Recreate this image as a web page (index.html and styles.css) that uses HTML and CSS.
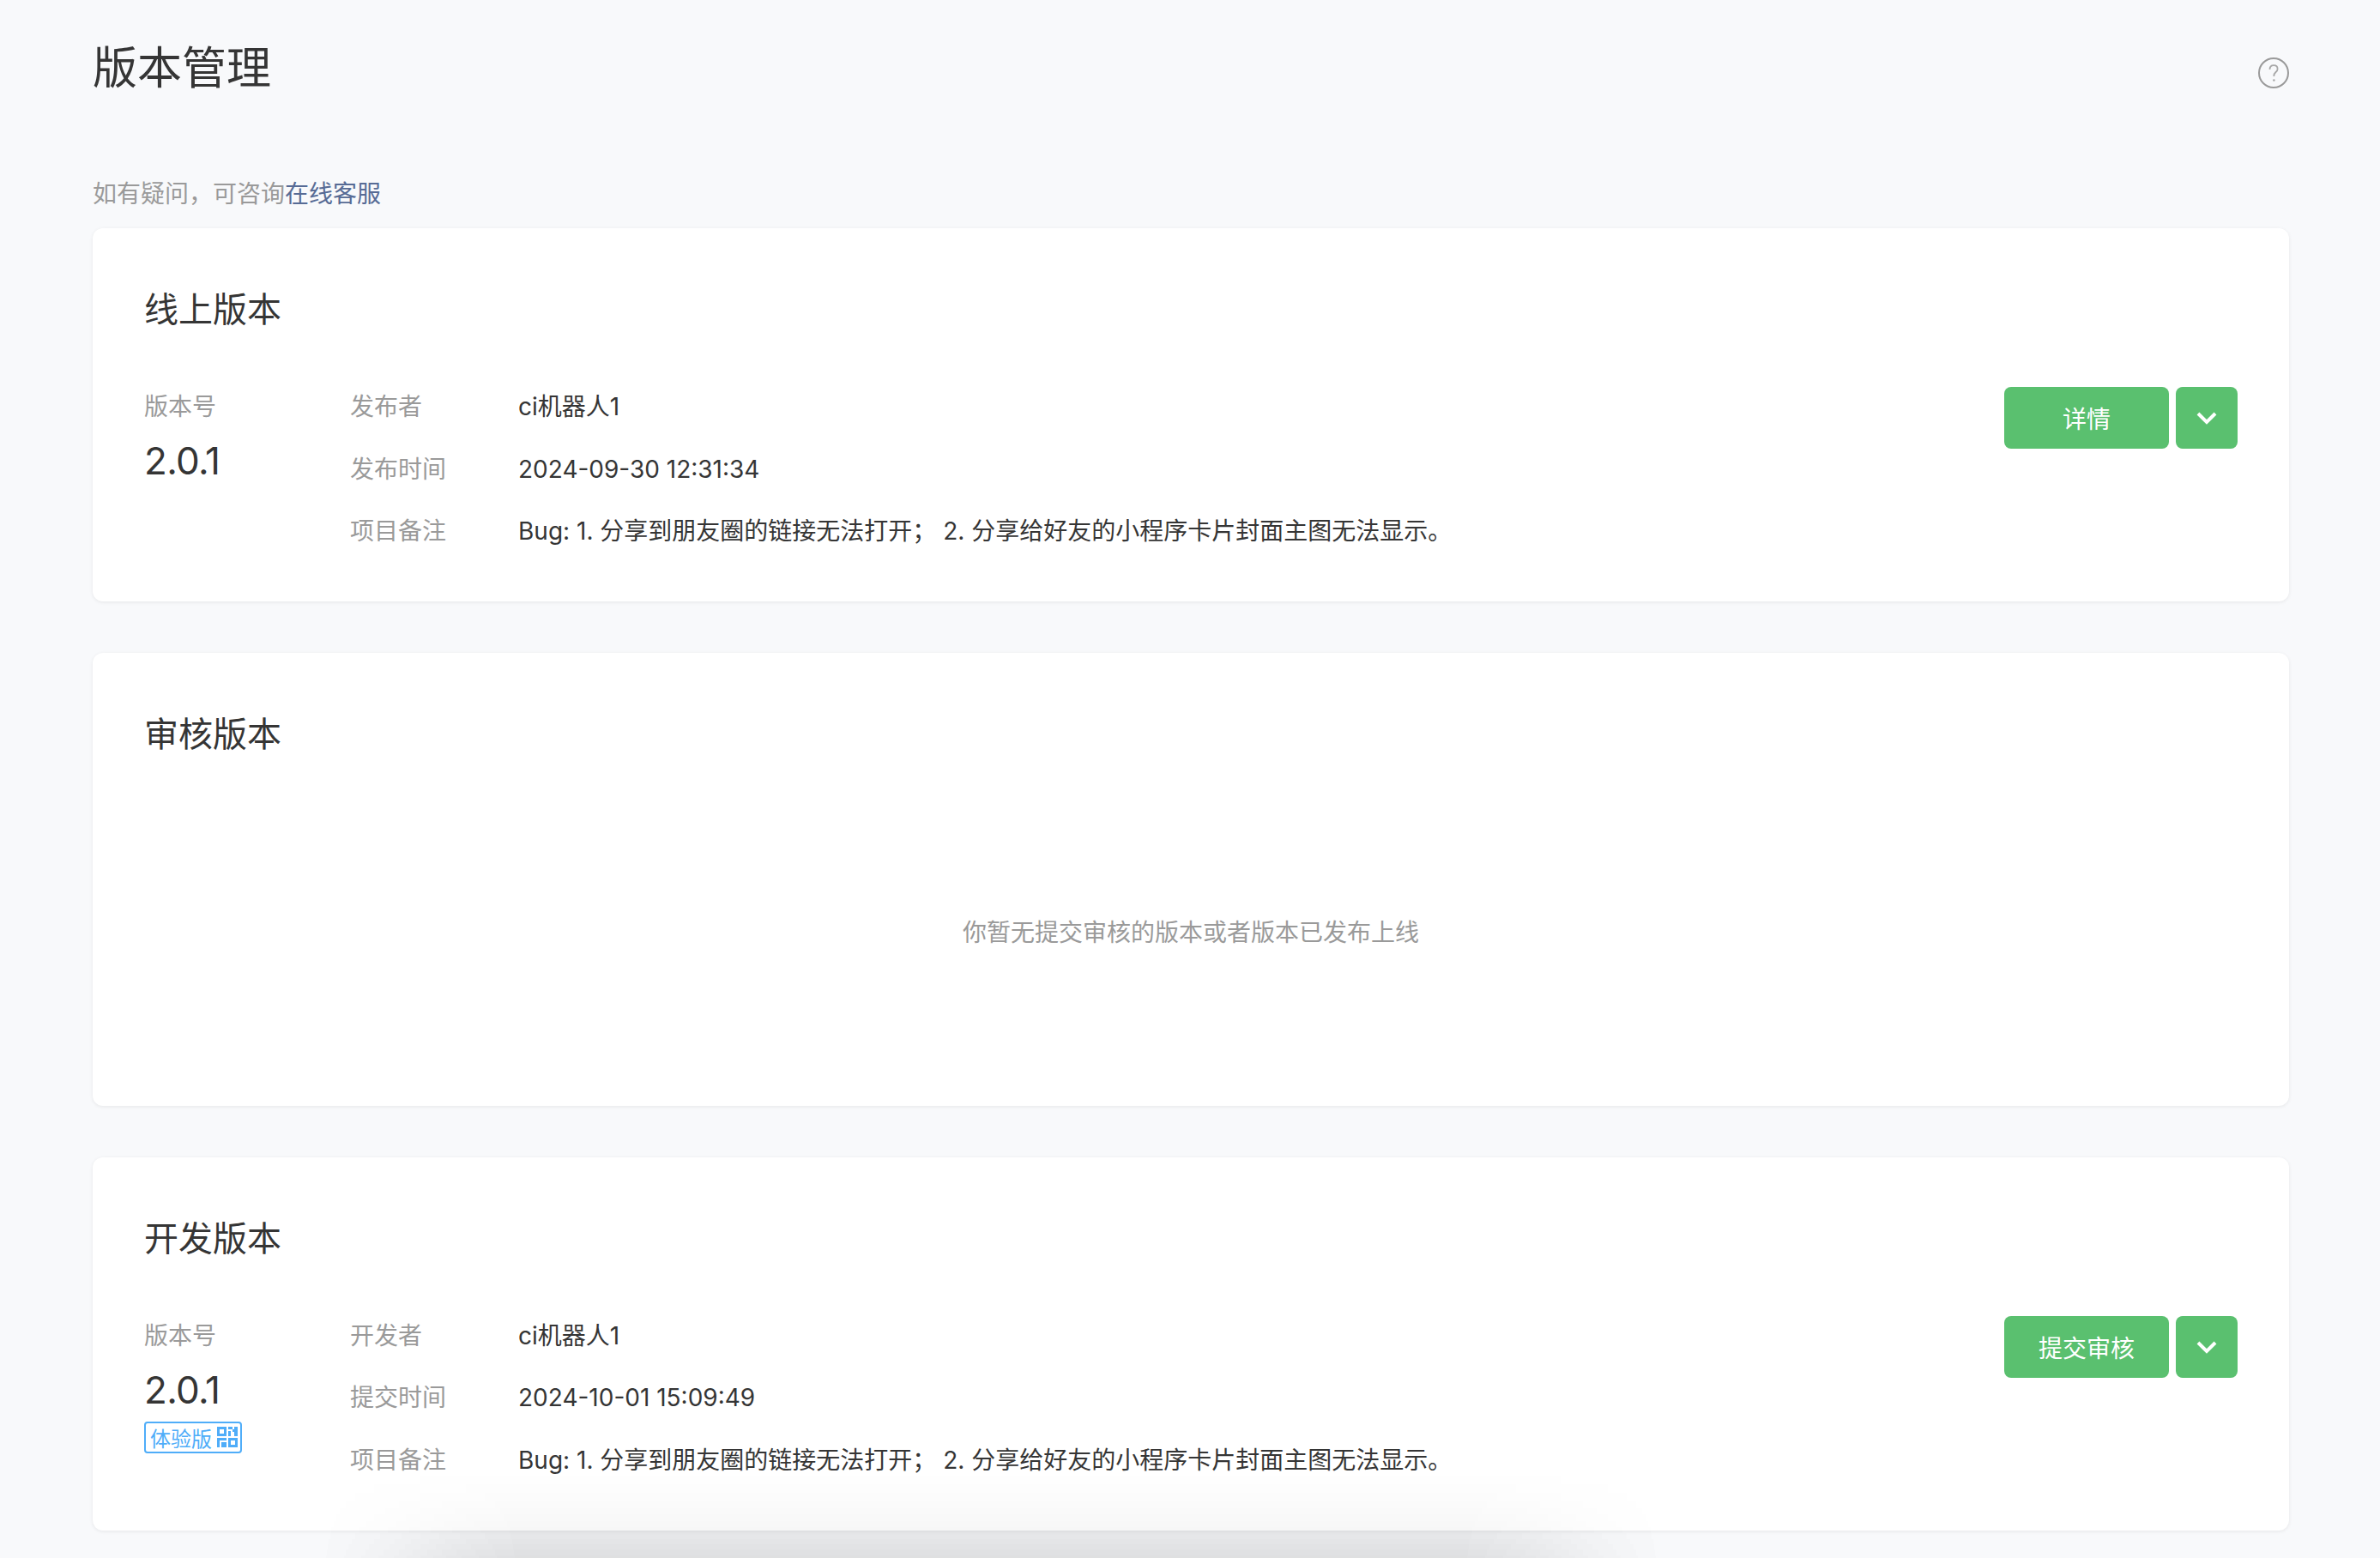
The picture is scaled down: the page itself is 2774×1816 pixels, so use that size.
FILE: index.html
```html
<!DOCTYPE html>
<html lang="zh-CN">
<head>
    <meta charset="UTF-8">
    <title>版本管理</title>
    <link rel="stylesheet" href="styles.css">
</head>
<body>
    <div id="page">
        <div class="pageHead">
            <h1 class="pageTitle">版本管理</h1>
            <svg class="helpIcon" viewBox="0 0 36 36">
                <circle cx="18" cy="18" r="17" fill="none" stroke="#9a9a9a" stroke-width="2"/>
                <path d="M13.5 14c0-3 2-4.800 4.600-4.800 2.700 0 4.500 1.800 4.500 4.200 0 3.500-4.200 3.800-4.200 7.600v1" fill="none" stroke="#a8a8a8" stroke-width="1.800"/>
                <circle cx="18.400" cy="26.500" r="1.300" fill="#a8a8a8"/>
            </svg>
        </div>
        <p class="notice">如有疑问，可咨询<a class="noticeLink">在线客服</a></p>

        <div class="card">
            <h2 class="cardTitle">线上版本</h2>
            <div class="versionRow">
                <div class="versionCol">
                    <div class="versionLabel">版本号</div>
                    <div class="versionNum">2.0.1</div>
                </div>
                <div class="infoList">
                    <div class="infoRow"><span class="infoLabel">发布者</span><span>ci机器人1</span></div>
                    <div class="infoRow"><span class="infoLabel">发布时间</span><span>2024-09-30 12:31:34</span></div>
                    <div class="infoRow"><span class="infoLabel">项目备注</span><span>Bug: 1. 分享到朋友圈的链接无法打开； 2. 分享给好友的小程序卡片封面主图无法显示。</span></div>
                </div>
                <div class="actions">
                    <button class="btn">详情</button>
                    <button class="btn btnMore">
                        <svg class="chevron" viewBox="0 0 24 16"><path d="M2 3l10 10L22 3" fill="none" stroke="#fff" stroke-width="4"/></svg>
                    </button>
                </div>
            </div>
        </div>

        <div class="card">
            <h2 class="cardTitle">审核版本</h2>
            <div class="emptyText">你暂无提交审核的版本或者版本已发布上线</div>
        </div>

        <div class="card">
            <h2 class="cardTitle">开发版本</h2>
            <div class="versionRow">
                <div class="versionCol">
                    <div class="versionLabel">版本号</div>
                    <div class="versionNum">2.0.1</div>
                    <div class="tag">体验版
                        <svg class="qrIcon" viewBox="0 0 24 24">
                            <path fill-rule="evenodd" d="M0 0h11v11H0zM3 3v5h5V3zM13 0h5v3h-5zM13 5h3v6h-3zM20 0h4v11h-4v-5h-2V3h2zM0 13h11v3H3v8H0zM5 18h6v6H5zM13 13h11v11H13zM16 16v5h5v-5z"/>
                        </svg>
                    </div>
                </div>
                <div class="infoList">
                    <div class="infoRow"><span class="infoLabel">开发者</span><span>ci机器人1</span></div>
                    <div class="infoRow"><span class="infoLabel">提交时间</span><span>2024-10-01 15:09:49</span></div>
                    <div class="infoRow"><span class="infoLabel">项目备注</span><span>Bug: 1. 分享到朋友圈的链接无法打开； 2. 分享给好友的小程序卡片封面主图无法显示。</span></div>
                </div>
                <div class="actions">
                    <button class="btn">提交审核</button>
                    <button class="btn btnMore">
                        <svg class="chevron" viewBox="0 0 24 16"><path d="M2 3l10 10L22 3" fill="none" stroke="#fff" stroke-width="4"/></svg>
                    </button>
                </div>
            </div>
        </div>
    </div>
</body>
</html>
```

FILE: styles.css
```css
html, body {
    margin: 0;
    height: 100%;
}
body {
    font-family: Inter, "Noto Sans CJK SC", sans-serif;
    font-size: 28px;
    color: #353535;
    background-color: #f8f9fb;
    overflow: hidden;
    position: relative;
}
/* soft shadow coming up from the bottom edge, partly through the last card */
body::before,
body::after {
    content: "";
    position: absolute;
    left: 370px;
    width: 1570px;
    bottom: 0;
    height: 100px;
    background: linear-gradient(to top, rgba(0, 0, 0, 0.05), rgba(0, 0, 0, 0.03) 32%, rgba(0, 0, 0, 0.014) 62%, rgba(0, 0, 0, 0));
    -webkit-mask-image: linear-gradient(to right, transparent, rgba(0, 0, 0, 0.3) 80px, rgba(0, 0, 0, 0.7) 160px, black 240px, black 1330px, rgba(0, 0, 0, 0.7) 1410px, rgba(0, 0, 0, 0.3) 1490px, transparent);
    mask-image: linear-gradient(to right, transparent, rgba(0, 0, 0, 0.3) 80px, rgba(0, 0, 0, 0.7) 160px, black 240px, black 1330px, rgba(0, 0, 0, 0.7) 1410px, rgba(0, 0, 0, 0.3) 1490px, transparent);
}
body::after {
    z-index: 2;
}
#page {
    position: relative;
    z-index: 1;
    padding: 0 106px 0 108px;
}
.pageHead {
    display: flex;
    justify-content: space-between;
    align-items: flex-start;
    height: 200px;
}
.pageTitle {
    margin: 46px 0 0;
    font-size: 52px;
    line-height: 68px;
    font-weight: 400;
}
.helpIcon {
    width: 36px;
    height: 36px;
    margin-top: 67px;
}
.notice {
    margin: 0;
    height: 66px;
    line-height: 52px;
    color: #9a9a9a;
}
.noticeLink {
    color: #576b95;
}
.card {
    background-color: white;
    border-radius: 12px;
    padding: 67px 60px 45.5px;
    margin-bottom: 60px;
    box-shadow: 0 1px 4px rgba(0, 0, 0, 0.08);
}
.card:last-child {
    margin-bottom: 0;
}
.cardTitle {
    margin: 0 0 49px;
    font-size: 40px;
    line-height: 56px;
    font-weight: 400;
}
.versionRow {
    display: flex;
    align-items: flex-start;
}
.versionCol {
    width: 240px;
    flex-shrink: 0;
}
.versionLabel {
    line-height: 72px;
    color: #9a9a9a;
}
.versionNum {
    font-size: 44px;
    line-height: 54px;
    letter-spacing: -0.7px;
}
.tag {
    display: inline-flex;
    align-items: center;
    gap: 6px;
    box-sizing: border-box;
    height: 37px;
    width: 114px;
    margin-top: 10px;
    padding-left: 5px;
    border: 2px solid #4fadf9;
    border-radius: 4px;
    font-size: 24px;
    color: #4fadf9;
    white-space: nowrap;
}
.qrIcon {
    width: 24px;
    height: 24px;
    fill: #4fadf9;
    flex-shrink: 0;
}
.infoList {
    flex: 1;
}
.infoRow {
    display: flex;
    line-height: 72.5px;
}
.infoLabel {
    width: 196px;
    flex-shrink: 0;
    color: #9a9a9a;
}
.actions {
    display: flex;
    gap: 8px;
    margin-top: 13px;
}
.btn {
    width: 192px;
    height: 72px;
    padding: 0;
    border: none;
    border-radius: 8px;
    background-color: #5ac06f;
    color: white;
    font-family: inherit;
    font-size: 28px;
}
.btnMore {
    width: 72px;
    display: flex;
    align-items: center;
    justify-content: center;
}
.chevron {
    width: 24px;
    height: 16px;
}
.emptyText {
    height: 310px;
    line-height: 308px;
    text-align: center;
    color: #9a9a9a;
}
```
